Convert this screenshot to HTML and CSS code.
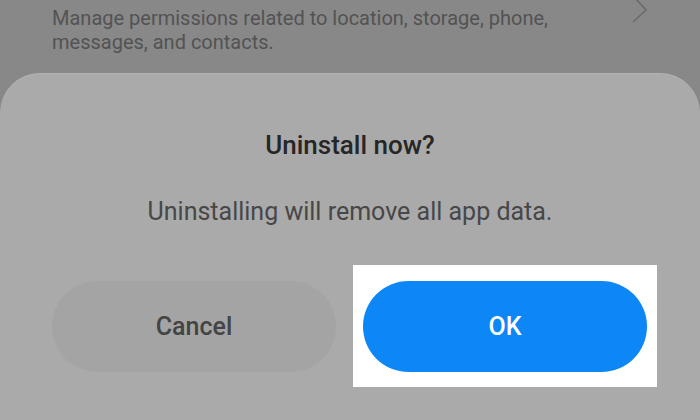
FILE: index.html
```html
<!DOCTYPE html>
<html lang="en">
<head>
    <meta charset="UTF-8">
    <meta name="viewport" content="width=device-width, initial-scale=1.0">
    <title>Uninstall now?</title>
    <link rel="stylesheet" href="styles.css">
</head>
<body>
    <div class="settings-row">
        <p class="row-desc">Manage permissions related to location, storage, phone, messages, and contacts.</p>
        <svg class="chevron" width="16" height="28" viewBox="0 0 16 28">
            <path d="M3 2 L14 14 L1 26" fill="none" stroke="#6a6a6a" stroke-width="1.6"/>
        </svg>
    </div>
    <div class="sheet">
        <h2 class="sheet-title">Uninstall now?</h2>
        <p class="sheet-msg">Uninstalling will remove all app data.</p>
        <div class="actions">
            <button class="btn btn-cancel">Cancel</button>
            <div class="highlight">
                <button class="btn btn-ok">OK</button>
            </div>
        </div>
    </div>
</body>
</html>
```

FILE: styles.css
```css
body {
    font-family: Roboto, "Liberation Sans", sans-serif;
    margin: 0;
    padding: 0;
    width: 700px;
    height: 420px;
    overflow: hidden;
    background-color: #888888; /* dimmed page behind the sheet */
}
.settings-row {
    display: flex;
    justify-content: space-between;
    align-items: flex-start;
    padding: 6px 52px 0 52px;
    height: 73px;
    box-sizing: border-box;
}
.row-desc {
    margin: 0;
    width: 540px;
    font-size: 20px;
    line-height: 24px;
    color: #535353;
}
.chevron {
    margin-top: -10px;
}
.sheet {
    height: 347px;
    background-color: #aaaaaa;
    border-radius: 40px 40px 0 0;
    box-shadow: inset 0 1px 0 rgba(255, 255, 255, 0.12);
    text-align: center;
    padding-top: 57px;
    box-sizing: border-box;
}
.sheet-title {
    margin: 0;
    font-size: 26px;
    font-weight: 500;
    line-height: 30px;
    color: #262626;
}
.sheet-msg {
    margin: 37px 0 0;
    font-size: 25px;
    line-height: 30px;
    color: #474747;
}
.actions {
    display: flex;
    align-items: center;
    gap: 17px;
    padding-left: 52px;
    margin-top: 38px;
}
.btn {
    width: 284px;
    height: 91px;
    border: none;
    border-radius: 46px;
    font-family: inherit;
    font-size: 25px;
    font-weight: 500;
    cursor: pointer;
}
.btn-cancel {
    background-color: #a4a4a4;
    color: #444444;
}
.highlight {
    background-color: #ffffff;
    padding: 16px 10px 15px;
}
.btn-ok {
    display: block;
    background-color: #0d86f6;
    color: #ffffff;
}
```
